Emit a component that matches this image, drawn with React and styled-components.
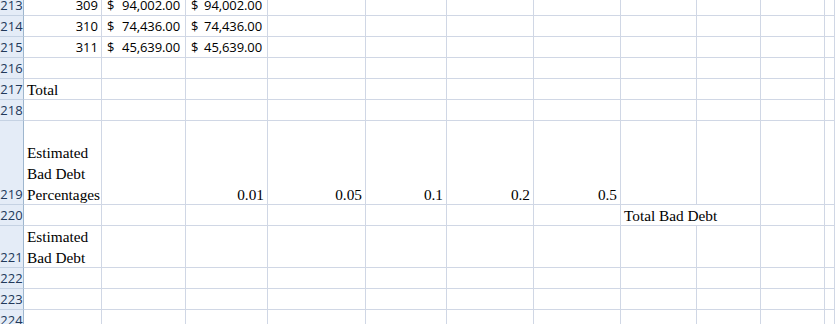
import React from 'react';
import styled, { createGlobalStyle } from 'styled-components';

const GlobalStyle = createGlobalStyle`
  html, body {
    margin: 0;
    padding: 0;
    background: #ffffff;
    overflow: hidden;
  }
`;

const COLS = [78, 84, 82, 98, 81, 87, 87, 76, 64, 64];

const Sheet = styled.div`
  display: grid;
  grid-template-columns: 24px ${COLS.map((w) => `${w}px`).join(' ')} 1fr;
  margin-top: -5px;
  width: 835px;
`;

const RowHead = styled.div`
  box-sizing: border-box;
  height: ${(props) => props.h}px;
  background: #e4ecf7;
  border-right: 1px solid #9eb6ce;
  border-bottom: 1px solid #c5d2e3;
  display: flex;
  align-items: flex-end;
  justify-content: center;
  font-family: 'Open Sans', 'Liberation Sans', sans-serif;
  font-size: 13px;
  line-height: 20px;
  color: #22395a;
`;

const Cell = styled.div`
  box-sizing: border-box;
  height: ${(props) => props.h}px;
  border-right: 1px solid #d0d7e5;
  border-bottom: 1px solid #d0d7e5;
  display: flex;
  align-items: flex-end;
  justify-content: ${(props) => (props.right ? 'flex-end' : 'flex-start')};
  padding: 0 3px;
  overflow: visible;
  white-space: ${(props) => (props.wrap ? 'normal' : 'nowrap')};
  font-family: ${(props) =>
    props.serif ? "'Liberation Serif', 'Times New Roman', serif" : "'Open Sans', 'Liberation Sans', sans-serif"};
  font-size: ${(props) => (props.serif ? '15.3px' : '13px')};
  line-height: ${(props) => (props.serif ? '21px' : '20px')};
  color: #000000;
  position: relative;
  z-index: ${(props) => (props.spill ? 1 : 0)};
`;

// text that runs past its cell hides the gridlines under it, as Excel does,
// but leaves the row's own bottom gridline visible
const SerifText = styled.span`
  margin-bottom: -1px;
  background: ${(props) =>
    props.spill ? 'linear-gradient(#ffffff, #ffffff) top left / 100% 20px no-repeat' : 'transparent'};
  padding-right: ${(props) => (props.spill ? '2px' : '0')};
`;

const Money = styled.div`
  display: flex;
  justify-content: space-between;
  width: 100%;
  padding: 0 2px;
  letter-spacing: -0.1px;
`;

const money = (v) => ({ money: v });

const ROWS = [
  { n: 213, h: 21, cells: { 0: '309', 1: money('94,002.00'), 2: money('94,002.00') } },
  { n: 214, h: 21, cells: { 0: '310', 1: money('74,436.00'), 2: money('74,436.00') } },
  { n: 215, h: 21, cells: { 0: '311', 1: money('45,639.00'), 2: money('45,639.00') } },
  { n: 216, h: 21, cells: {} },
  { n: 217, h: 21, cells: { 0: { text: 'Total' } } },
  { n: 218, h: 21, cells: {} },
  {
    n: 219,
    h: 84,
    cells: {
      0: { text: 'Estimated Bad Debt Percentages', wrap: true },
      2: { num: '0.01' },
      3: { num: '0.05' },
      4: { num: '0.1' },
      5: { num: '0.2' },
      6: { num: '0.5' },
    },
  },
  { n: 220, h: 21, cells: { 7: { text: 'Total Bad Debt', spill: true } } },
  { n: 221, h: 42, cells: { 0: { text: 'Estimated Bad Debt', wrap: true } } },
  { n: 222, h: 21, cells: {} },
  { n: 223, h: 21, cells: {} },
  { n: 224, h: 21, cells: {} },
];

const renderCell = (row, idx) => {
  const value = row.cells[idx];
  const key = `${row.n}-${idx}`;

  if (value === undefined) return <Cell key={key} h={row.h} />;

  if (typeof value === 'string') {
    return (
      <Cell key={key} h={row.h} right>
        {value}
      </Cell>
    );
  }

  if (value.money) {
    return (
      <Cell key={key} h={row.h}>
        <Money>
          <span>$</span>
          <span>{value.money}</span>
        </Money>
      </Cell>
    );
  }

  if (value.num) {
    return (
      <Cell key={key} h={row.h} serif right>
        <SerifText>{value.num}</SerifText>
      </Cell>
    );
  }

  return (
    <Cell key={key} h={row.h} serif wrap={value.wrap} spill={value.spill}>
      <SerifText spill={value.spill}>{value.text}</SerifText>
    </Cell>
  );
};

const App = () => {
  return (
    <>
      <GlobalStyle />
      <Sheet>
        {ROWS.map((row) => (
          <React.Fragment key={row.n}>
            <RowHead h={row.h}>{row.n}</RowHead>
            {COLS.map((_, idx) => renderCell(row, idx))}
            <Cell h={row.h} />
          </React.Fragment>
        ))}
      </Sheet>
    </>
  );
};

export default App;
